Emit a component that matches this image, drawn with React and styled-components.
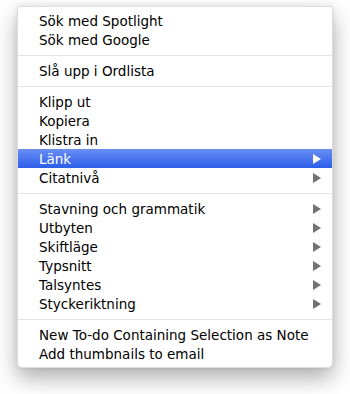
import React from "react";
import styled, { createGlobalStyle } from "styled-components";

const GlobalStyle = createGlobalStyle`
  body {
    margin: 0;
    background: #ffffff;
    font-family: "DejaVu Sans", "Liberation Sans", sans-serif;
  }
`;

const Page = styled.div`
  width: 350px;
  height: 394px;
  padding: 6px 17px 0 17px;
  box-sizing: border-box;
`;

const Menu = styled.div`
  width: 316px;
  box-sizing: border-box;
  background: #ffffff;
  border: 1px solid #dcdcdc;
  border-radius: 2px 2px 5px 5px;
  padding: 4px 0;
  box-shadow: 0 10px 22px rgba(0, 0, 0, 0.32), 0 0 6px rgba(0, 0, 0, 0.08);
`;

const Item = styled.div`
  height: 19px;
  display: flex;
  align-items: center;
  justify-content: space-between;
  padding: 0 11px 0 21px;
  font-size: 13.5px;
  color: ${(p) => (p.$active ? "#ffffff" : "#000000")};
  background: ${(p) =>
    p.$active ? "linear-gradient(#6a8ef3, #2b5ee9)" : "transparent"};
`;

const Arrow = styled.span`
  width: 0;
  height: 0;
  border-top: 5px solid transparent;
  border-bottom: 5px solid transparent;
  border-left: 8px solid ${(p) => (p.$active ? "#ffffff" : "#727272")};
`;

const Separator = styled.div`
  height: 12px;
  display: flex;
  align-items: center;

  &::after {
    content: "";
    flex: 1;
    height: 1px;
    background: #e3e3e3;
  }
`;

const groups = [
  [{ label: "Sök med Spotlight" }, { label: "Sök med Google" }],
  [{ label: "Slå upp i Ordlista" }],
  [
    { label: "Klipp ut" },
    { label: "Kopiera" },
    { label: "Klistra in" },
    { label: "Länk", sub: true, active: true },
    { label: "Citatnivå", sub: true },
  ],
  [
    { label: "Stavning och grammatik", sub: true },
    { label: "Utbyten", sub: true },
    { label: "Skiftläge", sub: true },
    { label: "Typsnitt", sub: true },
    { label: "Talsyntes", sub: true },
    { label: "Styckeriktning", sub: true },
  ],
  [
    { label: "New To-do Containing Selection as Note" },
    { label: "Add thumbnails to email" },
  ],
];

const App = () => {
  return (
    <>
      <GlobalStyle />
      <Page>
        <Menu>
          {groups.map((group, gi) => (
            <React.Fragment key={gi}>
              {gi > 0 && <Separator />}
              {group.map((item) => (
                <Item key={item.label} $active={item.active}>
                  <span>{item.label}</span>
                  {item.sub && <Arrow $active={item.active} />}
                </Item>
              ))}
            </React.Fragment>
          ))}
        </Menu>
      </Page>
    </>
  );
};

export default App;
